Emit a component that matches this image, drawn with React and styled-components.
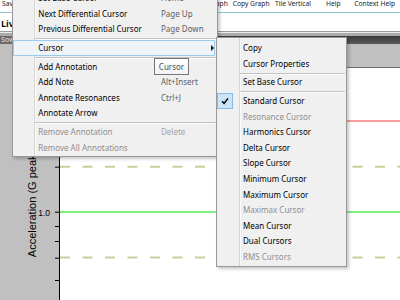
import React from 'react';
import styled, { createGlobalStyle } from 'styled-components';

const Global = createGlobalStyle`
  html, body { margin: 0; padding: 0; background: #fff; }
  body {
    width: 400px; height: 300px; overflow: hidden;
    font-family: "Noto Sans", "Open Sans", sans-serif;
  }
`;

const Screen = styled.div`
  position: relative;
  width: 400px;
  height: 300px;
  overflow: hidden;
  display: flex;
  flex-direction: column;
  background: #fff;
`;

const Toolbar = styled.div`
  flex: none;
  height: 11.5px;
  box-sizing: border-box;
  padding: 0 0 2px 2px;
  display: flex;
  align-items: center;
  font-size: 6.7px;
  line-height: 1;
  color: #1a1a1a;
  white-space: nowrap;
`;

const ToolItem = styled.span`
  flex: none;
  width: ${(p) => p.$w}px;
`;

const BlueRule = styled.div`
  flex: none;
  height: 1.5px;
  background: #8fc4dc;
`;

const TabStrip = styled.div`
  flex: none;
  height: 17.5px;
  box-sizing: border-box;
  padding: 3px 0 0 1px;
  display: flex;
  align-items: center;
  font-size: 9px;
  font-weight: 700;
  color: #111;
  white-space: nowrap;
`;

const Rule = styled.div`
  flex: none;
  height: ${(p) => p.$h}px;
  background: ${(p) => p.$c};
`;

const Band = styled.div`
  flex: none;
  height: 8px;
  display: flex;
  background: linear-gradient(#3b3b3b, #5a5a5a);
`;

const BandTab = styled.div`
  padding: 0 1px;
  background: #6a6a6a;
  color: #e2e2e2;
  font-size: 7px;
  line-height: 8px;
  white-space: nowrap;
`;

const ChartArea = styled.div`
  flex: 1;
  min-height: 0;
  display: flex;
  background: #c0c0c0;
`;

const Gutter = styled.div`
  flex: none;
  width: 59px;
  font-family: "Liberation Sans", Arial, sans-serif;
  svg { display: block; overflow: visible; }
`;

const PlotFrame = styled.div`
  flex: 1;
  display: flex;
  flex-direction: column;
  padding-top: 23.5px;
`;

const Plot = styled.div`
  flex: 1;
  background: #fff;
  border-top: 1px solid #6c6c6c;
  border-left: 1px solid #000;
  svg { display: block; }
`;

/* ---------- menus ---------- */

const Menu = styled.div`
  position: absolute;
  left: ${(p) => p.$x}px;
  top: ${(p) => p.$y}px;
  width: ${(p) => p.$w}px;
  box-sizing: border-box;
  padding: 2.5px 0 ${(p) => p.$pb}px 0;
  border: 1px solid #979797;
  background:
    linear-gradient(90deg,
      transparent ${(p) => p.$gutter}px,
      #d6d6d6 ${(p) => p.$gutter}px,
      #d6d6d6 ${(p) => p.$gutter + 1}px,
      #fbfbfb ${(p) => p.$gutter + 1}px,
      #fbfbfb ${(p) => p.$gutter + 2}px,
      transparent ${(p) => p.$gutter + 2}px),
    #f0f0f0;
  box-shadow: 2px 2px 3px rgba(0, 0, 0, 0.22);
  font-size: 8px;
  line-height: 1;
  white-space: nowrap;
`;

const Row = styled.div`
  height: 15.6px;
  margin: 0 ${(p) => p.$mr}px 0 ${(p) => p.$ml}px;
  display: grid;
  grid-template-columns: ${(p) => p.$icon}px ${(p) => p.$label}px 1fr auto;
  align-items: center;
  color: ${(p) => (p.$dis ? '#8f8f8f' : '#000')};
  background: ${(p) => (p.$hl ? '#eef4fa' : 'transparent')};
  box-shadow: ${(p) => (p.$hl ? 'inset 0 0 0 1px #9bcbea' : 'none')};
`;

const IconCell = styled.div`
  height: 15.6px;
  display: flex;
  align-items: center;
`;

const Label = styled.span``;

const Shortcut = styled.span`
  color: ${(p) => (p.$dis ? '#a3a3a3' : '#5e5e5e')};
`;

const SubArrow = styled.span`
  width: 0;
  height: 0;
  margin-right: 1px;
  border-left: 3.5px solid #111;
  border-top: 3.5px solid transparent;
  border-bottom: 3.5px solid transparent;
`;

const Sep = styled.div`
  height: 3px;
  margin: 0 1px 0 ${(p) => p.$gutter + 1}px;
  background:
    linear-gradient(#c2c2c2, #c2c2c2) 0 1px / 100% 1px no-repeat,
    linear-gradient(#fcfcfc, #fcfcfc) 0 2px / 100% 1px no-repeat;
`;

const CheckBox = styled.div`
  width: 16px;
  height: 16px;
  box-sizing: border-box;
  border: 1px solid #86bbe8;
  background: #cce4f7;
  display: flex;
  align-items: center;
  justify-content: center;
`;

const Tip = styled.div`
  position: absolute;
  left: 154px;
  top: 58px;
  width: 35px;
  height: 17px;
  box-sizing: border-box;
  border: 1px solid #767676;
  background: linear-gradient(#ffffff, #f3f3f6);
  color: #4f4f4f;
  font-size: 8px;
  display: flex;
  align-items: center;
  justify-content: center;
  padding-bottom: 0.5px;
`;

const tools = [
  { t: 'Save Data', w: 189.5 },
  { t: 'Print Graph', w: 41.2 },
  { t: 'Copy Graph', w: 42.3 },
  { t: 'Tile Vertical', w: 51 },
  { t: 'Help', w: 28.3 },
  { t: 'Context Help', w: 42 },
];

const mainItems = [
  { label: 'Set Base Cursor', sc: 'Home' },
  { label: 'Next Differential Cursor', sc: 'Page Up' },
  { label: 'Previous Differential Cursor', sc: 'Page Down' },
  { sep: true },
  { label: 'Cursor', sub: true, hl: true },
  { sep: true },
  { label: 'Add Annotation' },
  { label: 'Add Note', sc: 'Alt+Insert' },
  { label: 'Annotate Resonances', sc: 'Ctrl+J' },
  { label: 'Annotate Arrow' },
  { sep: true },
  { label: 'Remove Annotation', sc: 'Delete', dis: true },
  { label: 'Remove All Annotations', dis: true },
];

const subItems = [
  { label: 'Copy' },
  { label: 'Cursor Properties' },
  { sep: true },
  { label: 'Set Base Cursor' },
  { sep: true },
  { label: 'Standard Cursor', checked: true },
  { label: 'Resonance Cursor', dis: true },
  { label: 'Harmonics Cursor' },
  { label: 'Delta Cursor' },
  { label: 'Slope Cursor' },
  { label: 'Minimum Cursor' },
  { label: 'Maximum Cursor' },
  { label: 'Maximax Cursor', dis: true },
  { label: 'Mean Cursor' },
  { label: 'Dual Cursors' },
  { label: 'RMS Cursors', dis: true },
];

const Check = () => (
  <svg width="8" height="8" viewBox="0 0 8 8">
    <path d="M1 4.2 L3.1 6.4 L7 1.4" fill="none" stroke="#000" strokeWidth="1.5" />
  </svg>
);

function MenuList({ items, gutter, ml, mr, icon, label }) {
  return items.map((it, i) =>
    it.sep ? (
      <Sep key={i} $gutter={gutter} />
    ) : (
      <Row key={i} $dis={it.dis} $hl={it.hl} $ml={ml} $mr={mr} $icon={icon} $label={label}>
        <IconCell>{it.checked && <CheckBox><Check /></CheckBox>}</IconCell>
        <Label>{it.label}</Label>
        <Shortcut $dis={it.dis}>{it.sc || ''}</Shortcut>
        {it.sub ? <SubArrow /> : <span />}
      </Row>
    )
  );
}

const ticks = [123.2, 168.2, 182.5, 197.5, 214.2, 236.5];

export default function App() {
  return (
    <>
      <Global />
      <Screen>
        <Toolbar>
          {tools.map((t) => (
            <ToolItem key={t.t} $w={t.w}>{t.t}</ToolItem>
          ))}
        </Toolbar>
        <BlueRule />
        <TabStrip>Live Data</TabStrip>
        <Rule $h={1} $c="#9c9c9c" />
        <Rule $h={1.5} $c="#ececec" />
        <Rule $h={2.5} $c="#ababab" />
        <Band>
          <BandTab>Sow</BandTab>
        </Band>
        <ChartArea>
          <Gutter>
            <svg width="59" height="257">
              {ticks.map((y) => (
                <line key={y} x1="55" x2="59" y1={y} y2={y} stroke="#000" strokeWidth="1" />
              ))}
              <text x="50" y="171.6" fontSize="8.5" textAnchor="end" fill="#000">1.0</text>
              <text
                x="36"
                y="213.2"
                fontSize="11"
                fill="#000"
                transform="rotate(-90 36 213.2)"
              >
                Acceleration (G peak)
              </text>
            </svg>
          </Gutter>
          <PlotFrame>
            <Plot>
              <svg width="340" height="232">
                <line x1="0" x2="340" y1="53" y2="53" stroke="#ff7d7d" strokeWidth="1.5" />
                <line x1="0" x2="340" y1="98.7" y2="98.7" stroke="#cdcd9c" strokeWidth="2" strokeDasharray="10 12.5" />
                <line x1="0" x2="340" y1="144" y2="144" stroke="#7ff07f" strokeWidth="2" />
                <line x1="0" x2="340" y1="189.5" y2="189.5" stroke="#cdcd9c" strokeWidth="2" strokeDasharray="10 12.5" />
              </svg>
            </Plot>
          </PlotFrame>
        </ChartArea>

        <Menu $x={12} $y={-13.1} $w={206} $gutter={21.3} $pb={0.6}>
          <MenuList items={mainItems} gutter={21.3} ml={0.3} mr={2} icon={25} label={122.7} />
        </Menu>
        <Tip>Cursor</Tip>
        <Menu $x={216} $y={37} $w={131} $gutter={22} $pb={1}>
          <MenuList items={subItems} gutter={22} ml={0} mr={0} icon={26} label={100} />
        </Menu>
      </Screen>
    </>
  );
}
